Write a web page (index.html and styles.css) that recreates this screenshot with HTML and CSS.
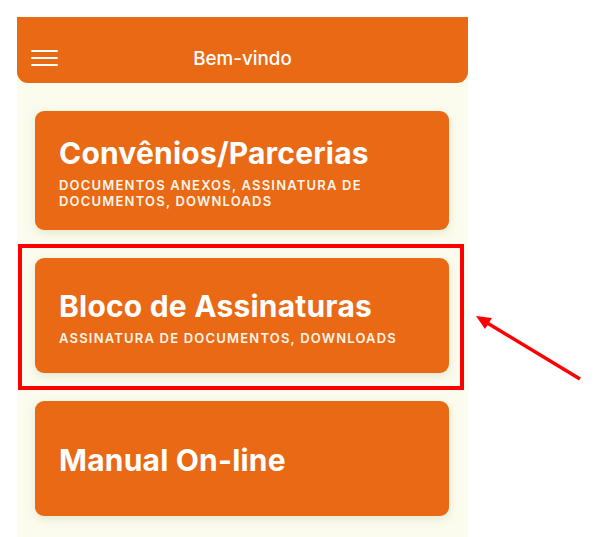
FILE: index.html
```html
<!DOCTYPE html>
<html lang="pt">
<head>
<meta charset="utf-8">
<title>Bem-vindo</title>
<link rel="stylesheet" href="styles.css">
</head>
<body>
<div class="screen">
  <header class="topbar">
    <button class="menu" aria-label="Menu">
      <span></span><span></span><span></span>
    </button>
    <h1 class="topbar-title">Bem-vindo</h1>
  </header>
  <main class="list">
    <a class="card">
      <span class="card-title">Convênios/Parcerias</span>
      <span class="card-sub">Documentos anexos, assinatura de documentos, downloads</span>
    </a>
    <a class="card">
      <span class="card-title">Bloco de Assinaturas</span>
      <span class="card-sub">Assinatura de documentos, downloads</span>
    </a>
    <a class="card">
      <span class="card-title">Manual On-line</span>
    </a>
  </main>
</div>
<div class="highlight"></div>
<svg class="arrow" width="120" height="80" viewBox="0 0 120 80">
  <line x1="104" y1="63" x2="8" y2="5" stroke="#ff0000" stroke-width="3.5" stroke-linecap="butt"/>
  <polygon points="0,0 16,2 9,13" fill="#ff0000"/>
</svg>
</body>
</html>
```
FILE: styles.css
```css
* { box-sizing: border-box; }
html, body { margin: 0; padding: 0; background: #ffffff; }
body {
  font-family: Inter, "Noto Sans", "Liberation Sans", sans-serif;
  width: 595px;
  height: 537px;
  overflow: hidden;
  position: relative;
}
.screen {
  margin: 17px 0 0 17px;
  width: 451px;
  height: 520px;
  background: #fbfcee;
  display: flex;
  flex-direction: column;
}
.topbar {
  height: 66px;
  background: #e96914;
  border-radius: 0 0 11px 11px;
  display: flex;
  align-items: center;
  justify-content: center;
  position: relative;
  flex-shrink: 0;
  padding-top: 16px;
}
.menu {
  position: absolute;
  left: 14px;
  top: 33px;
  width: 27px;
  height: 16px;
  padding: 0;
  border: 0;
  background: transparent;
  display: flex;
  flex-direction: column;
  justify-content: space-between;
}
.menu span {
  display: block;
  height: 2px;
  background: #ffffff;
  border-radius: 1px;
}
.topbar-title {
  margin: 0;
  color: #ffffff;
  font-size: 18.8px;
  font-weight: 500;
}
.list {
  padding: 28px 19px 0 18px;
  display: flex;
  flex-direction: column;
  gap: 28px;
}
.card {
  min-height: 115px;
  background: #e96914;
  border-radius: 9px;
  box-shadow: 0 3px 10px rgba(140, 130, 60, 0.18);
  padding: 24px 24px 21px;
  display: flex;
  flex-direction: column;
  justify-content: center;
  color: #ffffff;
  text-decoration: none;
}
.card-title {
  font-size: 30px;
  font-weight: 700;
  line-height: 36px;
  letter-spacing: 0.2px;
}
.card-sub {
  margin-top: 6px;
  font-size: 13px;
  font-weight: 600;
  line-height: 16px;
  text-transform: uppercase;
  letter-spacing: 1.2px;
  color: #fdf5ea;
}
.highlight {
  position: absolute;
  left: 18px;
  top: 244px;
  width: 446px;
  height: 146px;
  border: 4px solid #ff0000;
}
.arrow {
  position: absolute;
  left: 476px;
  top: 316px;
}
```
